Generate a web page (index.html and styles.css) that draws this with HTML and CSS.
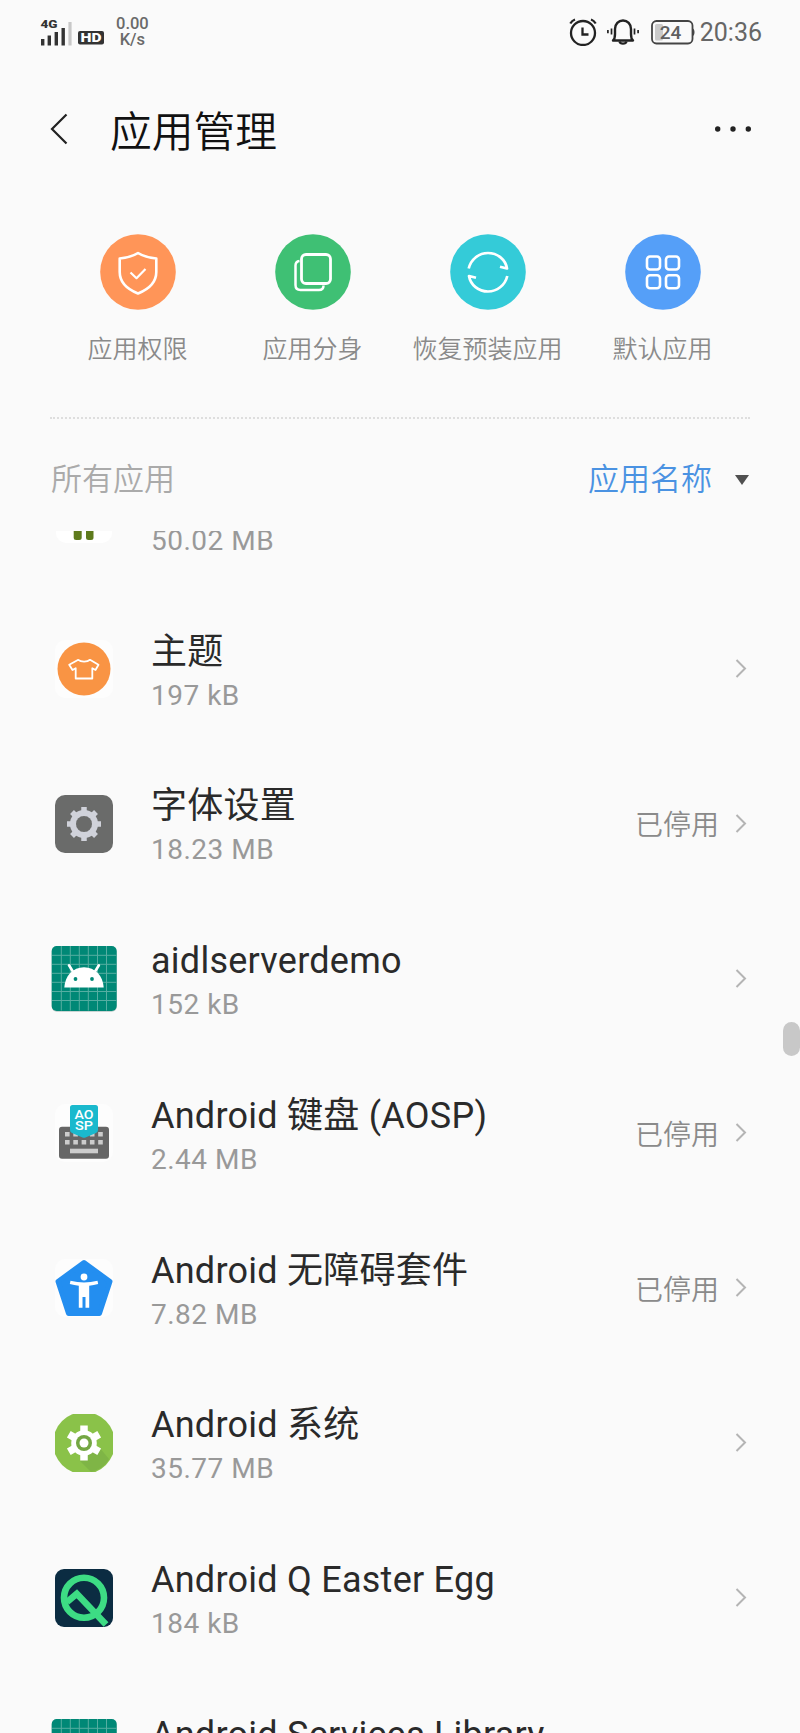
FILE: index.html
```
<!DOCTYPE html>
<html lang="zh-CN">
<head>
    <meta charset="UTF-8">
    <meta name="viewport" content="width=device-width, initial-scale=1.0">
    <title>应用管理</title>
    <link rel="stylesheet" href="styles.css">
</head>
<body>

<!-- shared icons -->
<svg class="defs">
    <symbol id="arrow" viewBox="0 0 12 20">
        <path d="M1.500 1 10 9.500 1.500 18" fill="none" stroke="#b4b4b4" stroke-width="2"/>
    </symbol>
    <symbol id="droid" viewBox="0 0 68 68">
        <rect x="1.700" y="1.700" width="65" height="65" rx="5" fill="#b9c9c6"/>
        <rect x="1.700" y="1" width="65" height="65" rx="5" fill="#008876"/>
        <path d="M11.300 1v64.500M20.300 1v64.500M29.300 1v64.500M38.300 1v64.500M47.500 1v64.500M56.500 1v64.500M2 10.300h64.500M2 19.300h64.500M2 28.300h64.500M2 37.300h64.500M2 46.500h64.500M2 55.500h64.500" stroke="#55aea2" stroke-width="1"/>
        <path d="M14.300 42.500c.6-11.500 8.500-20.300 19.700-20.300S53.100 31 53.700 42.500z" fill="#fff"/>
        <path d="m19 20.300 4 6.500M48.900 20.300l-4 6.500" stroke="#fff" stroke-width="2.600" stroke-linecap="round"/>
        <circle cx="25.500" cy="34" r="1.900" fill="#008876"/>
        <circle cx="42" cy="34" r="1.900" fill="#008876"/>
    </symbol>
</svg>

<div class="status-bar">
    <svg class="signal" width="32" height="30" viewBox="0 0 32 30">
        <text x="0.500" y="11" class="net" textLength="17" lengthAdjust="spacingAndGlyphs">4G</text>
        <path d="M2.700 22v6.500M9.300 18.500v10M16.300 15v13.500M23.200 11v17.500" stroke="#333" stroke-width="3.400"/>
        <path d="M30 5v23.500" stroke="#c8c8c8" stroke-width="3.200"/>
    </svg>
    <svg class="hd" width="26" height="14" viewBox="0 0 26 14">
        <rect width="26" height="13.500" rx="2" fill="#333"/>
        <text x="13" y="11" text-anchor="middle" textLength="21" lengthAdjust="spacingAndGlyphs">HD</text>
    </svg>
    <div class="speed">
        <div>0.00</div>
        <div>K/s</div>
    </div>
    <div class="status-right">
        <svg width="28" height="28" viewBox="0 0 28 28" fill="none" stroke="#222" stroke-width="2.300">
            <circle cx="14" cy="15" r="12"/>
            <path d="M13.500 9.500v7h6"/>
            <path d="M1.300 5.500C2.500 3.500 4 2.200 6 1.500M26.700 5.500C25.500 3.500 24 2.200 22 1.500"/>
        </svg>
        <svg class="bell" width="34" height="28" viewBox="0 0 34 28" fill="none" stroke="#222" stroke-width="2.400">
            <path d="M7 22.500c1.800-1.500 2-3.500 2-6.500v-5c0-5 3.500-8.500 8-8.500s8 3.500 8 8.500v5c0 3 .2 5 2 6.500z" stroke-linejoin="round"/>
            <path d="M13.500 23.500c.8 2.800 6.200 2.800 7 0"/>
            <path d="M5.500 10.500v6M28.500 10.500v6M1.900 12v3.200M32.100 12v3.200" stroke-width="1.700"/>
        </svg>
        <svg class="battery" width="44" height="25" viewBox="0 0 44 25">
            <rect x="1" y="1" width="40.500" height="22.500" rx="4.500" fill="none" stroke="#444" stroke-width="1.800"/>
            <path d="M42 8.500c2 1.500 2 6 0 7.500z" fill="#444"/>
            <rect x="4" y="4" width="8" height="16.500" rx="1.500" fill="#cacaca"/>
            <text x="19.500" y="19" text-anchor="middle">24</text>
        </svg>
        <span class="time">20:36</span>
    </div>
</div>

<div class="header">
    <svg class="back" width="18" height="32" viewBox="0 0 18 32">
        <path d="M16.500 1.500 2 16l14.500 14.500" fill="none" stroke="#222" stroke-width="2.200"/>
    </svg>
    <h1>应用管理</h1>
    <svg class="more" width="36" height="6" viewBox="0 0 36 6" fill="#222">
        <circle cx="2.700" cy="3" r="2.700"/>
        <circle cx="18" cy="3" r="2.700"/>
        <circle cx="33.300" cy="3" r="2.700"/>
    </svg>
</div>

<div class="actions">
    <div class="action">
        <svg viewBox="0 0 76 76">
            <circle cx="38" cy="38" r="37.800" fill="#ff9558"/>
            <g fill="none" stroke="#fff" stroke-width="2.600" stroke-linejoin="round">
                <path d="M38 19c5.500 3.500 11.500 5 18.300 5.500V38c0 10.500-8.300 17.500-18.300 21.500-10-4-18.300-11-18.300-21.500V24.500C26.500 24 32.500 22.500 38 19z"/>
                <path d="m30.500 38.500 6 5.700 9-9.200" stroke-width="2.200"/>
            </g>
        </svg>
        <span>应用权限</span>
    </div>
    <div class="action">
        <svg viewBox="0 0 76 76">
            <circle cx="38" cy="38" r="37.800" fill="#3fc074"/>
            <g fill="none" stroke="#fff" stroke-width="2.800">
                <rect x="26.500" y="20.500" width="29" height="29" rx="4.500"/>
                <path d="M24.500 27c-2.500.3-4 1.800-4 4.500v19.500c0 3.500 1.500 5 5 5h18.500c3 0 4.500-1.500 4.500-4.500" stroke-width="2.500"/>
            </g>
        </svg>
        <span>应用分身</span>
    </div>
    <div class="action">
        <svg viewBox="0 0 76 76">
            <circle cx="38" cy="38" r="37.800" fill="#34cbd8"/>
            <g fill="none" stroke="#fff" stroke-width="2.700" stroke-linejoin="round">
                <path d="M18.700 34.500C21 25 29 19 38 19c9.500 0 17.500 6.500 19 15.500l-7-1.800"/>
                <path d="M57.300 42C55 51.500 47 57.500 38 57.500c-9.500 0-17.500-6.500-19-15.500l7 1.800"/>
            </g>
        </svg>
        <span>恢复预装应用</span>
    </div>
    <div class="action">
        <svg viewBox="0 0 76 76">
            <circle cx="38" cy="38" r="37.800" fill="#559ff8"/>
            <g fill="none" stroke="#fff" stroke-width="2.600">
                <rect x="22" y="22.500" width="13" height="13" rx="3"/>
                <rect x="41" y="22.500" width="13" height="13" rx="3"/>
                <rect x="22" y="41.300" width="13" height="13" rx="3"/>
                <rect x="41" y="41.300" width="13" height="13" rx="3"/>
            </g>
        </svg>
        <span>默认应用</span>
    </div>
</div>

<div class="list-header">
    <span class="all">所有应用</span>
    <span class="sort">应用名称</span>
    <span class="triangle"></span>
</div>

<div class="list">
    <div class="row">
        <svg class="icon" viewBox="0 0 68 68">
            <rect x="6" y="6" width="56" height="57" rx="10" fill="#fff"/>
            <rect x="23.700" y="44" width="8" height="16" rx="2.500" fill="#5e7a1c"/>
            <rect x="36" y="44" width="7.500" height="16" rx="2.500" fill="#5e7a1c"/>
        </svg>
        <div class="info">
            <div class="name">&nbsp;</div>
            <div class="size">50.02 MB</div>
        </div>
    </div>

    <div class="row">
        <svg class="icon" viewBox="0 0 68 68">
            <rect x="5" y="5" width="58" height="58" rx="10" fill="#fdfdfd"/>
            <circle cx="34" cy="34" r="26.500" fill="#f99444"/>
            <path d="M28.300 24.800c2.500 2.300 9 2.300 11.700 0l8.500 5-3 5.200-3.200-1.800v10.300H25.700V33.200L22.500 35l-3.300-5.200z" fill="none" stroke="#fff" stroke-width="1.800" stroke-linejoin="round"/>
        </svg>
        <div class="info">
            <div class="name">主题</div>
            <div class="size">197 kB</div>
        </div>
        <svg class="arrow"><use href="#arrow"/></svg>
    </div>

    <div class="row">
        <svg class="icon" viewBox="0 0 68 68">
            <rect x="5" y="5" width="58" height="58" rx="10" fill="#6a6b6a"/>
            <g fill="none" stroke="#d0d2da">
                <circle cx="34" cy="34" r="11" stroke-width="6"/>
                <path d="M34 17v34M17 34h34M22 22l24 24M46 22 22 46" stroke-width="5.500"/>
            </g>
            <circle cx="34" cy="34" r="8" fill="#6a6b6a"/>
        </svg>
        <div class="info">
            <div class="name">字体设置</div>
            <div class="size">18.23 MB</div>
        </div>
        <span class="state">已停用</span>
        <svg class="arrow"><use href="#arrow"/></svg>
    </div>

    <div class="row">
        <svg class="icon"><use href="#droid"/></svg>
        <div class="info">
            <div class="name">aidlserverdemo</div>
            <div class="size">152 kB</div>
        </div>
        <svg class="arrow"><use href="#arrow"/></svg>
    </div>

    <div class="row">
        <svg class="icon" viewBox="0 0 68 68">
            <rect x="5" y="5" width="58" height="58" rx="10" fill="#fdfdfd"/>
            <rect x="9" y="27.700" width="50" height="32" rx="3" fill="#666"/>
            <path d="M15 35.300h38M15 43.300h38" stroke="#ccc" stroke-width="4.600" stroke-dasharray="4.600 3.700"/>
            <rect x="20" y="49.700" width="28" height="4.600" fill="#ccc"/>
            <path d="M22.500 6h23Q48 6 48 8.500V31q0 2-2 3l-10.500 4.500q-1.500.7-3 0L22 34q-2-1-2-3V8.500Q20 6 22.500 6z" fill="#1ab9cd"/>
            <text class="aosp" x="34" y="19.500" text-anchor="middle" textLength="19" lengthAdjust="spacingAndGlyphs">AO</text>
            <text class="aosp" x="34" y="31" text-anchor="middle" textLength="18" lengthAdjust="spacingAndGlyphs">SP</text>
        </svg>
        <div class="info">
            <div class="name">Android 键盘 (AOSP)</div>
            <div class="size">2.44 MB</div>
        </div>
        <span class="state">已停用</span>
        <svg class="arrow"><use href="#arrow"/></svg>
    </div>

    <div class="row">
        <svg class="icon" viewBox="0 0 68 68">
            <rect x="5" y="5" width="58" height="58" rx="10" fill="#fdfdfd"/>
            <path d="M34 8.500 60 27.500 49.500 59.500h-31L8 27.500z" fill="#238ef0" stroke="#238ef0" stroke-width="5" stroke-linejoin="round"/>
            <circle cx="34" cy="23" r="3.400" fill="#fff"/>
            <path d="M20.500 26.800c9 2.100 18 2.100 27 0l.7 3.200c-3 .9-6 1.500-9 1.800v22h-3.700V43h-3v10.800h-3.700v-22c-3-.3-6-.9-9-1.800z" fill="#fff"/>
        </svg>
        <div class="info">
            <div class="name">Android 无障碍套件</div>
            <div class="size">7.82 MB</div>
        </div>
        <span class="state">已停用</span>
        <svg class="arrow"><use href="#arrow"/></svg>
    </div>

    <div class="row">
        <svg class="icon" viewBox="0 0 68 68">
            <clipPath id="tile"><rect x="5" y="5" width="58" height="58" rx="10"/></clipPath>
            <g clip-path="url(#tile)">
                <circle cx="34" cy="34" r="31" fill="#8ac249"/>
                <path d="m49 38 10 12c-4 7-10 11-18 13l-11-11z" fill="#7fb546"/>
            </g>
            <g fill="none" stroke="#fff">
                <circle cx="34" cy="34" r="10.300" stroke-width="5"/>
                <path d="M34 16.500v35M18.800 25.200l30.400 17.600M49.200 25.200 18.800 42.800" stroke-width="7.500"/>
            </g>
            <circle cx="34" cy="34" r="8" fill="#74a743"/>
            <circle cx="34" cy="34" r="4.500" fill="#fff"/>
        </svg>
        <div class="info">
            <div class="name">Android 系统</div>
            <div class="size">35.77 MB</div>
        </div>
        <svg class="arrow"><use href="#arrow"/></svg>
    </div>

    <div class="row">
        <svg class="icon" viewBox="0 0 68 68">
            <rect x="5" y="5" width="58" height="58" rx="9" fill="#0b2c42"/>
            <g fill="none" stroke="#3ddc84" stroke-width="6.600">
                <circle cx="34" cy="33.700" r="20"/>
                <path d="m17 38 9.800-8.300L56 60.500"/>
            </g>
        </svg>
        <div class="info">
            <div class="name">Android Q Easter Egg</div>
            <div class="size">184 kB</div>
        </div>
        <svg class="arrow"><use href="#arrow"/></svg>
    </div>

    <div class="row">
        <svg class="icon"><use href="#droid"/></svg>
        <div class="info">
            <div class="name">Android Services Library</div>
            <div class="size">&nbsp;</div>
        </div>
        <svg class="arrow"><use href="#arrow"/></svg>
    </div>
</div>

<div class="scrollbar"></div>

</body>
</html>
```
FILE: styles.css
```
* {
    margin: 0;
    padding: 0;
    box-sizing: border-box;
}
body {
    background: #fafafa;
    color: #2a2a2a;
    font-family: Roboto, 'Noto Sans CJK SC', sans-serif;
    width: 800px;
    height: 1733px;
    position: relative;
    overflow: hidden;
    display: flex;
    flex-direction: column;
}
svg {
    display: block;
    flex-shrink: 0;
}
.defs {
    position: absolute;
    width: 0;
    height: 0;
}

/* status bar */
.status-bar {
    height: 64px;
    padding: 0 38px 0 40px;
    display: flex;
    align-items: center;
    flex-shrink: 0;
}
.net {
    font-size: 11.5px;
    font-weight: 900;
    fill: #333;
}
.hd {
    margin: 12px 12px 0 6px;
}
.hd text {
    font-size: 12px;
    font-weight: 900;
    fill: #fff;
}
.speed {
    font-size: 16.5px;
    font-weight: 500;
    line-height: 16px;
    text-align: center;
    color: #6a6a6a;
}
.status-right {
    margin-left: auto;
    display: flex;
    align-items: center;
}
.bell {
    margin: 0 11px 0 9px;
}
.battery text {
    font-size: 19px;
    font-weight: 500;
    fill: #606060;
}
.time {
    font-size: 25px;
    font-weight: 450;
    line-height: 30px;
    color: #666;
    margin: 2px 0 0 5px;
}

/* title */
.header {
    height: 131px;
    padding: 0 49px 0 50px;
    display: flex;
    align-items: center;
    flex-shrink: 0;
}
.header h1 {
    font-size: 41.75px;
    font-weight: 350;
    line-height: 60px;
    color: #111;
    margin: 6px 0 0 42px;
}
.more {
    margin-left: auto;
}
.back,
.more {
    margin-top: -2px;
}

/* shortcuts */
.actions {
    height: 224px;
    margin: 0 50px;
    padding-top: 39px;
    display: grid;
    grid-template-columns: repeat(4, 1fr);
    border-bottom: 2px dotted #dedede;
    flex-shrink: 0;
}
.action {
    display: flex;
    flex-direction: column;
    align-items: center;
    gap: 22px;
}
.action svg {
    width: 76px;
    height: 76px;
}
.action span {
    font-size: 25px;
    font-weight: 350;
    line-height: 36px;
    color: #8a8a8a;
    white-space: nowrap;
}

.list-header {
    height: 112px;
    padding: 9px 51px 0 51px;
    display: flex;
    align-items: center;
    font-size: 31px;
    font-weight: 350;
    line-height: 46px;
    flex-shrink: 0;
}
.all {
    color: #aaa;
}
.sort {
    color: #4a92e2;
    margin: 1px 0 0 auto;
}
.triangle {
    border: 7px solid transparent;
    border-top: 10px solid #505050;
    border-bottom: 0;
    margin-left: 23px;
}

/* app list, scrolled halfway past its first row */
.list {
    flex: 1;
    overflow: hidden;
}
.row {
    height: 154.75px;
    padding: 0 53px 0 50px;
    display: flex;
    align-items: center;
}
.row:first-child {
    margin-top: -94px;
}
.icon {
    width: 68px;
    height: 68px;
}
.aosp {
    font-size: 12px;
    font-weight: 500;
    fill: #fff;
}
.info {
    flex: 1;
    margin-left: 33px;
    padding-top: 5px;
}
.name {
    font-size: 36px;
    font-weight: 400;
    line-height: 48px;
    letter-spacing: 0.25px;
}
.size {
    font-size: 28px;
    line-height: 40px;
    letter-spacing: 0.5px;
    color: #999;
}
.state {
    font-size: 28px;
    font-weight: 350;
    line-height: 40px;
    color: #8a8a8a;
    padding-top: 5px;
}
.arrow {
    width: 12px;
    height: 20px;
    margin-left: 16px;
}

.scrollbar {
    position: absolute;
    right: 0;
    top: 1022px;
    width: 17px;
    height: 34px;
    border-radius: 9px;
    background: #c8c8c8;
}
```
